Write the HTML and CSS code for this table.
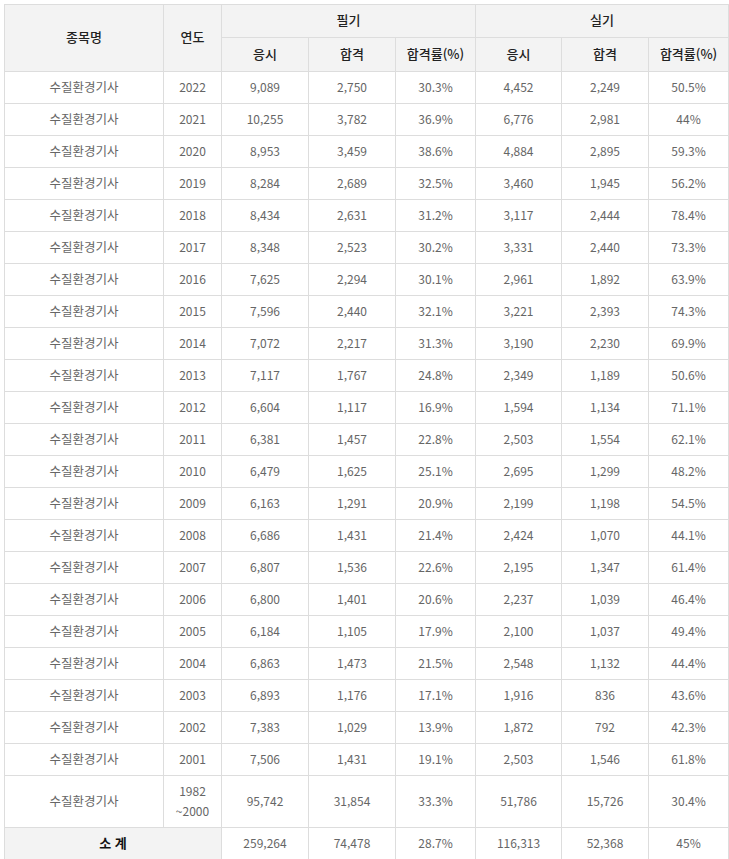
FILE: index.html
```html
<!DOCTYPE html>
<html lang="ko">
<head>
<meta charset="utf-8">
<link rel="stylesheet" href="styles.css">
</head>
<body>
<table class="stats">
<colgroup>
<col class="c-name"><col class="c-year"><col class="c-a"><col class="c-b"><col class="c-c"><col class="c-d"><col class="c-e"><col class="c-f">
</colgroup>
<thead>
<tr class="h1"><th rowspan="2">종목명</th><th rowspan="2">연도</th><th colspan="3">필기</th><th colspan="3">실기</th></tr>
<tr class="h2"><th>응시</th><th>합격</th><th>합격률(%)</th><th>응시</th><th>합격</th><th>합격률(%)</th></tr>
</thead>
<tbody>
<tr><td class="name">수질환경기사</td><td>2022</td><td>9,089</td><td>2,750</td><td>30.3%</td><td>4,452</td><td>2,249</td><td>50.5%</td></tr>
<tr><td class="name">수질환경기사</td><td>2021</td><td>10,255</td><td>3,782</td><td>36.9%</td><td>6,776</td><td>2,981</td><td>44%</td></tr>
<tr><td class="name">수질환경기사</td><td>2020</td><td>8,953</td><td>3,459</td><td>38.6%</td><td>4,884</td><td>2,895</td><td>59.3%</td></tr>
<tr><td class="name">수질환경기사</td><td>2019</td><td>8,284</td><td>2,689</td><td>32.5%</td><td>3,460</td><td>1,945</td><td>56.2%</td></tr>
<tr><td class="name">수질환경기사</td><td>2018</td><td>8,434</td><td>2,631</td><td>31.2%</td><td>3,117</td><td>2,444</td><td>78.4%</td></tr>
<tr><td class="name">수질환경기사</td><td>2017</td><td>8,348</td><td>2,523</td><td>30.2%</td><td>3,331</td><td>2,440</td><td>73.3%</td></tr>
<tr><td class="name">수질환경기사</td><td>2016</td><td>7,625</td><td>2,294</td><td>30.1%</td><td>2,961</td><td>1,892</td><td>63.9%</td></tr>
<tr><td class="name">수질환경기사</td><td>2015</td><td>7,596</td><td>2,440</td><td>32.1%</td><td>3,221</td><td>2,393</td><td>74.3%</td></tr>
<tr><td class="name">수질환경기사</td><td>2014</td><td>7,072</td><td>2,217</td><td>31.3%</td><td>3,190</td><td>2,230</td><td>69.9%</td></tr>
<tr><td class="name">수질환경기사</td><td>2013</td><td>7,117</td><td>1,767</td><td>24.8%</td><td>2,349</td><td>1,189</td><td>50.6%</td></tr>
<tr><td class="name">수질환경기사</td><td>2012</td><td>6,604</td><td>1,117</td><td>16.9%</td><td>1,594</td><td>1,134</td><td>71.1%</td></tr>
<tr><td class="name">수질환경기사</td><td>2011</td><td>6,381</td><td>1,457</td><td>22.8%</td><td>2,503</td><td>1,554</td><td>62.1%</td></tr>
<tr><td class="name">수질환경기사</td><td>2010</td><td>6,479</td><td>1,625</td><td>25.1%</td><td>2,695</td><td>1,299</td><td>48.2%</td></tr>
<tr><td class="name">수질환경기사</td><td>2009</td><td>6,163</td><td>1,291</td><td>20.9%</td><td>2,199</td><td>1,198</td><td>54.5%</td></tr>
<tr><td class="name">수질환경기사</td><td>2008</td><td>6,686</td><td>1,431</td><td>21.4%</td><td>2,424</td><td>1,070</td><td>44.1%</td></tr>
<tr><td class="name">수질환경기사</td><td>2007</td><td>6,807</td><td>1,536</td><td>22.6%</td><td>2,195</td><td>1,347</td><td>61.4%</td></tr>
<tr><td class="name">수질환경기사</td><td>2006</td><td>6,800</td><td>1,401</td><td>20.6%</td><td>2,237</td><td>1,039</td><td>46.4%</td></tr>
<tr><td class="name">수질환경기사</td><td>2005</td><td>6,184</td><td>1,105</td><td>17.9%</td><td>2,100</td><td>1,037</td><td>49.4%</td></tr>
<tr><td class="name">수질환경기사</td><td>2004</td><td>6,863</td><td>1,473</td><td>21.5%</td><td>2,548</td><td>1,132</td><td>44.4%</td></tr>
<tr><td class="name">수질환경기사</td><td>2003</td><td>6,893</td><td>1,176</td><td>17.1%</td><td>1,916</td><td>836</td><td>43.6%</td></tr>
<tr><td class="name">수질환경기사</td><td>2002</td><td>7,383</td><td>1,029</td><td>13.9%</td><td>1,872</td><td>792</td><td>42.3%</td></tr>
<tr><td class="name">수질환경기사</td><td>2001</td><td>7,506</td><td>1,431</td><td>19.1%</td><td>2,503</td><td>1,546</td><td>61.8%</td></tr>
<tr class="tall"><td class="name">수질환경기사</td><td>1982<br>~2000</td><td>95,742</td><td>31,854</td><td>33.3%</td><td>51,786</td><td>15,726</td><td>30.4%</td></tr>
<tr class="total"><th colspan="2">소 계</th><td>259,264</td><td>74,478</td><td>28.7%</td><td>116,313</td><td>52,368</td><td>45%</td></tr>
</tbody>
</table>
</body>
</html>
```
FILE: styles.css
```css
html, body {
  margin: 0;
  padding: 0;
  background: #fff;
}
body {
  padding: 4px 0 0 4px;
  font-family: "Noto Sans CJK KR", "Noto Sans", sans-serif;
  font-size: 12px;
}
.stats {
  border-collapse: collapse;
  table-layout: fixed;
  width: 725px;
}
.c-name { width: 159px; }
.c-year { width: 58px; }
.c-a { width: 87px; }
.c-b { width: 87px; }
.c-c { width: 80px; }
.c-d { width: 86px; }
.c-e { width: 87px; }
.c-f { width: 80px; }
.stats th,
.stats td {
  border: 1px solid #dddddd;
  padding: 0 0 2px 0;
  text-align: center;
  vertical-align: middle;
  line-height: 20px;
}
.stats th {
  background: #f3f3f3;
  color: #222;
  font-weight: 500;
  font-size: 13px;
}
.stats td {
  color: #666;
  height: 29px;
}
.stats td.name {
  font-size: 12.5px;
}
.h1 th { height: 30px; }
.h2 th { height: 31px; }
.stats .tall td { height: 49px; }
.stats .total th {
  font-weight: bold;
  color: #111;
  height: 29px;
}
```
